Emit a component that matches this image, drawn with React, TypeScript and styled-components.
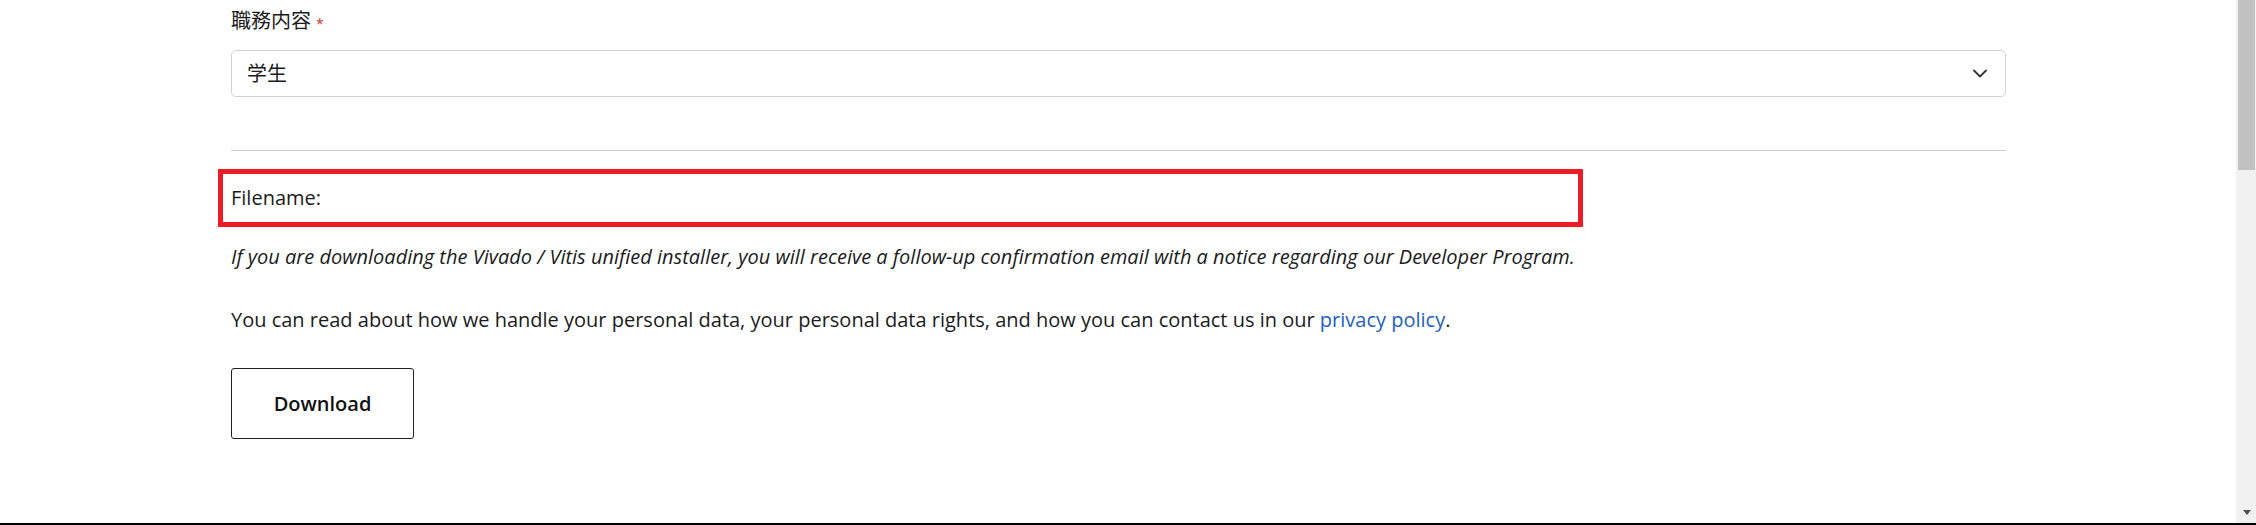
import styled, { createGlobalStyle } from "styled-components";

const GlobalStyle = createGlobalStyle`
  * {
    box-sizing: border-box;
  }
  html, body {
    margin: 0;
    padding: 0;
    background: #fff;
  }
  body {
    font-family: "Open Sans", "Noto Sans CJK JP", sans-serif;
    color: #1b1b1b;
    overflow: hidden;
  }
`;

const Window = styled.div`
  height: 525px;
  display: flex;
  flex-direction: column;
  border-bottom: 2px solid #000;
`;

const Viewport = styled.div`
  flex: 1;
  display: flex;
  min-height: 0;
`;

const Page = styled.main`
  flex: 1;
`;

const Container = styled.form`
  width: 1775px;
  margin-left: 231px;
  padding-top: 6px;
  font-size: 20px;
  line-height: 30px;
`;

const Label = styled.label`
  display: flex;
  align-items: flex-start;
`;

const Required = styled.span`
  color: #c0392b;
  font-size: 14px;
  line-height: 14px;
  margin: 11px 0 0 5px;
`;

const Select = styled.div`
  margin-top: 14px;
  height: 47px;
  border: 1px solid #cfd3d9;
  border-radius: 5px;
  display: flex;
  align-items: center;
  justify-content: space-between;
  padding: 0 18px 0 15px;
`;

const Rule = styled.hr`
  margin: 53px 0 0;
  border: none;
  height: 1px;
  background: #cccccc;
`;

const Highlight = styled.div`
  margin: 18px 0 0 -13px;
  width: 1365px;
  height: 58px;
  border: 5px solid #ed1c24;
  padding-left: 8px;
  display: flex;
  align-items: center;
`;

const Text = styled.p<{ $italic?: boolean; $gap: number }>`
  margin: ${(p) => p.$gap}px 0 0;
  font-style: ${(p) => (p.$italic ? "italic" : "normal")};
`;

const Link = styled.a`
  color: #2160c4;
  text-decoration: none;
`;

const Button = styled.button`
  margin-top: 33px;
  width: 183px;
  height: 71px;
  background: #fff;
  border: 1px solid #1f1f1f;
  border-radius: 3px;
  font-family: "Open Sans", sans-serif;
  font-weight: 600;
  font-size: 20px;
  line-height: 30px;
  color: #111;
  padding: 0;
`;

const Scrollbar = styled.div`
  width: 20px;
  background: #f1f1f1;
  display: flex;
  flex-direction: column;
  justify-content: space-between;
  padding: 0 1px 8px 2px;
`;

const Thumb = styled.div`
  height: 170px;
  background: #c1c1c1;
`;

const Arrow = styled.div`
  align-self: center;
  width: 0;
  height: 0;
  border-left: 4.5px solid transparent;
  border-right: 4.5px solid transparent;
  border-top: 5px solid #505050;
`;

function Chevron() {
  return (
    <svg width="14" height="9" viewBox="0 0 14 9" fill="none">
      <polyline
        points="1,1.5 7,7.5 13,1.5"
        stroke="#333"
        strokeWidth="1.8"
        strokeLinecap="round"
        strokeLinejoin="round"
      />
    </svg>
  );
}

export default function App() {
  return (
    <Window>
      <GlobalStyle />
      <Viewport>
        <Page>
          <Container>
            <Label>
              職務内容<Required>*</Required>
            </Label>
            <Select>
              <span>学生</span>
              <Chevron />
            </Select>
            <Rule />
            <Highlight>Filename:</Highlight>
            <Text $italic $gap={15}>
              If you are downloading the Vivado / Vitis unified installer, you
              will receive a follow-up confirmation email with a notice
              regarding our Developer Program.
            </Text>
            <Text $gap={33}>
              You can read about how we handle your personal data, your personal
              data rights, and how you can contact us in our{" "}
              <Link href="#">privacy policy</Link>.
            </Text>
            <Button type="button">Download</Button>
          </Container>
        </Page>
        <Scrollbar>
          <Thumb />
          <Arrow />
        </Scrollbar>
      </Viewport>
    </Window>
  );
}
